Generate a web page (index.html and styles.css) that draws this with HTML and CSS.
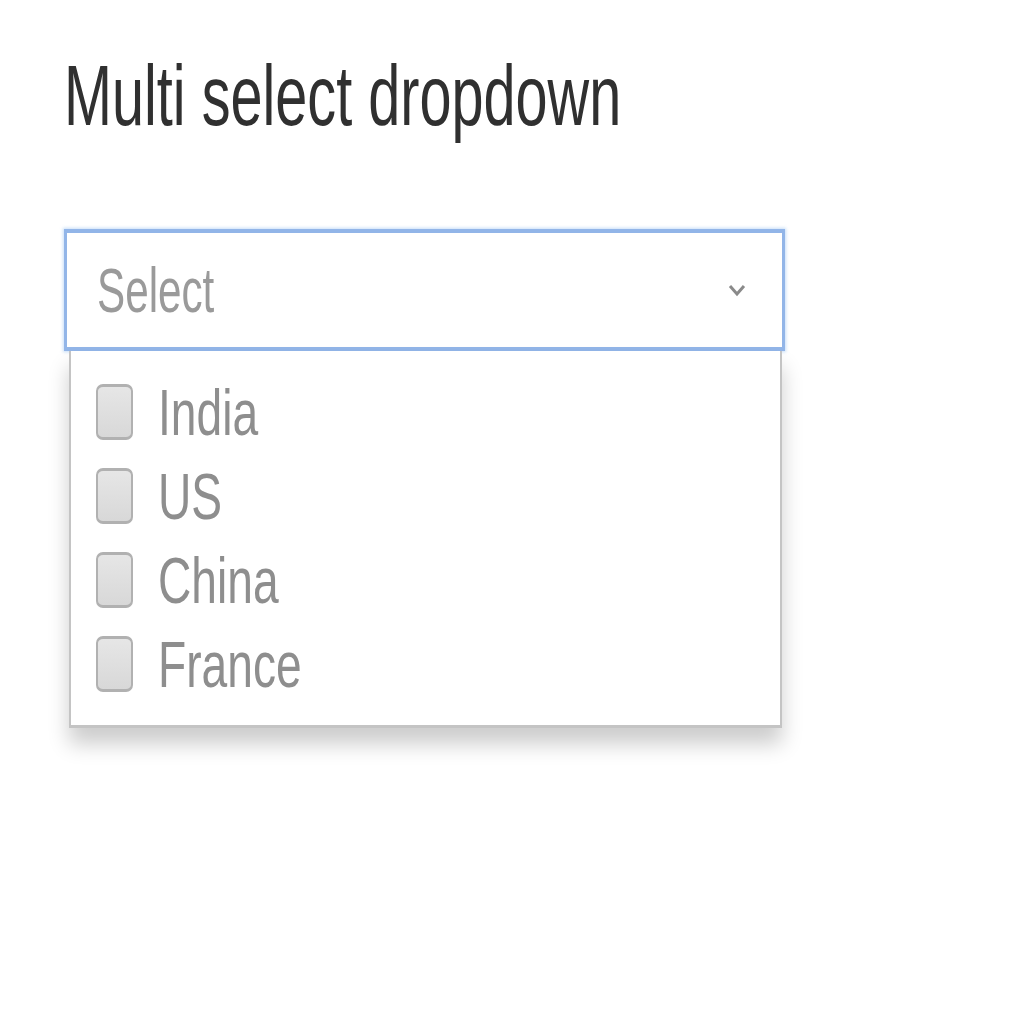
FILE: index.html
```html
<!DOCTYPE html>
<html lang="en">
<head>
<meta charset="utf-8">
<title>Multi select dropdown</title>
<link rel="stylesheet" href="styles.css">
</head>
<body>
<div class="page">
  <h1 class="title"><span class="sx">Multi select dropdown</span></h1>
  <div class="multiselect">
    <div class="select-box">
      <span class="sx placeholder">Select</span>
      <svg class="chevron" width="18" height="14" viewBox="0 0 18 14"><polyline points="2,3 9,11 16,3" fill="none" stroke="#8a8a8a" stroke-width="3"/></svg>
    </div>
    <div class="options">
      <label class="option"><span class="check"></span><span class="sx label">India</span></label>
      <label class="option"><span class="check"></span><span class="sx label">US</span></label>
      <label class="option"><span class="check"></span><span class="sx label">China</span></label>
      <label class="option"><span class="check"></span><span class="sx label">France</span></label>
    </div>
  </div>
</div>
</body>
</html>
```
FILE: styles.css
```css
html, body {
  margin: 0;
  padding: 0;
  background: #ffffff;
}
body {
  font-family: "Liberation Sans", Arial, sans-serif;
}
.page {
  box-sizing: border-box;
  min-height: 1024px;
  padding: 52px 0 0 64px;
}
.sx {
  display: inline-block;
  white-space: nowrap;
  transform: scaleX(0.67);
  transform-origin: 0 50%;
}
.title {
  margin: 0 0 91px 0;
  font-size: 86px;
  line-height: 86px;
  font-weight: normal;
  color: #303030;
  height: 86px;
}
.multiselect {
  width: 721px;
}
.select-box {
  box-sizing: border-box;
  height: 122px;
  border-style: solid;
  border-color: #92b5e8;
  border-width: 4px 3px;
  box-shadow: 0 0 3px 1px rgba(160, 198, 244, 0.6);
  display: flex;
  align-items: center;
  justify-content: space-between;
  padding: 0 36px 0 30px;
  background: #fff;
}
.placeholder {
  font-size: 63px;
  line-height: 63px;
  color: #9a9a9a;
}
.chevron {
  display: block;
  flex: none;
}
.options {
  box-sizing: border-box;
  margin: 0 3px 0 5px;
  border-style: solid;
  border-color: #c4c4c4;
  border-width: 0 2px 3px 2px;
  padding: 19px 0 19px 25px;
  box-shadow: 0 16px 20px rgba(0, 0, 0, 0.2);
  background: #fff;
}
.option {
  height: 84px;
  display: flex;
  align-items: center;
  gap: 25px;
}
.check {
  box-sizing: border-box;
  width: 37px;
  height: 56px;
  border-style: solid;
  border-color: #b1b1b1;
  border-width: 3px 2px;
  border-radius: 7px;
  background: linear-gradient(#e6e6e6, #d8d8d8);
  flex: none;
}
.label {
  font-size: 65px;
  line-height: 65px;
  color: #8e8e8e;
  transform: scaleX(0.71);
}
```
